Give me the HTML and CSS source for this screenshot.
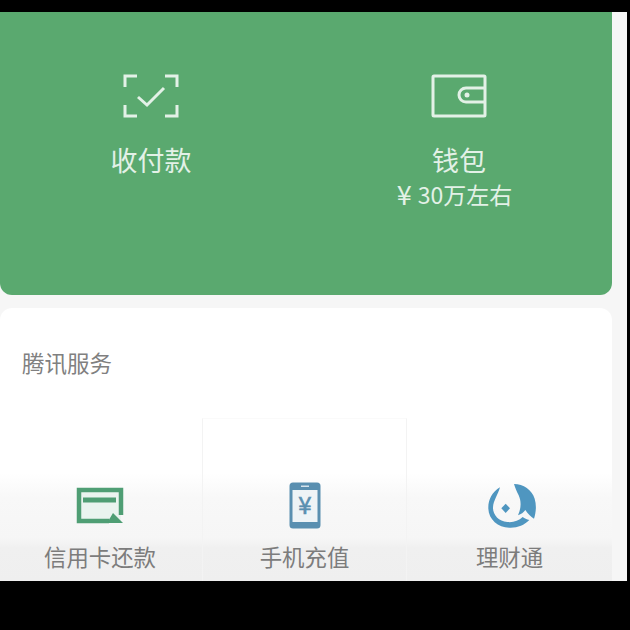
FILE: index.html
```html
<!DOCTYPE html>
<html lang="zh-CN">
<head>
    <meta charset="UTF-8">
    <meta name="viewport" content="width=device-width, initial-scale=1.0">
    <title>支付</title>
    <link rel="stylesheet" href="styles.css">
</head>
<body>
    <div class="screen">
        <div class="pay-card">
            <div class="pay-item">
                <svg class="pay-icon" width="56" height="46" viewBox="0 0 56 46">
                    <path d="M2 14V3H14M42 3H54V14M2 32V43H14M42 43H54V32" />
                    <path d="M15 24L24 32L41 15" />
                </svg>
                <div class="pay-name">收付款</div>
            </div>
            <div class="pay-item pay-item-right">
                <svg class="pay-icon" width="56" height="46" viewBox="0 0 56 46">
                    <rect x="2" y="3" width="52" height="40" rx="1" />
                    <path d="M54 15H35A7 7 0 0 0 35 29H54" />
                    <circle class="pay-dot" cx="36" cy="22" r="2.5" />
                </svg>
                <div class="pay-name">钱包</div>
                <div class="pay-note"><span class="pay-yen">¥</span>30万左右</div>
            </div>
        </div>

        <div class="service-card">
            <div class="service-title">腾讯服务</div>
            <div class="service-grid">
                <div class="service-cell service-cell-first">
                    <div class="service-icon">
                        <svg width="48" height="38" viewBox="0 0 48 38">
                            <path class="card-fill" d="M3 3H45V35H3Z" />
                            <path class="card-line" d="M33 34H3V3H45V28" />
                            <path class="card-bar" d="M7 13H40" />
                            <path class="card-tip" d="M31 36L37 26L47 36Z" />
                        </svg>
                    </div>
                    <div class="service-name">信用卡还款</div>
                </div>
                <div class="service-cell service-cell-mid">
                    <div class="service-icon">
                        <svg width="32" height="47" viewBox="0 0 32 47">
                            <rect class="phone-body" x="0.5" y="0.5" width="31" height="46" rx="3.5" />
                            <rect class="phone-screen" x="3.5" y="8" width="25" height="32" />
                            <rect class="phone-slot" x="12" y="3.5" width="8" height="1.5" />
                            <text class="phone-yen" x="16" y="32" text-anchor="middle">¥</text>
                        </svg>
                    </div>
                    <div class="service-name">手机充值</div>
                </div>
                <div class="service-cell">
                    <div class="service-icon service-icon-fish">
                        <svg width="50" height="46" viewBox="70 42 150 136">
                            <path class="fish" d="M106 54C82 68 70 92 71 118C72 150 100 174 134 175C158 176 178 168 194 152C186 150 180 147 174 143C162 154 146 160 128 158C102 156 84 136 85 114C86 94 100 76 106 54Z" />
                            <path class="fish" d="M148 44C176 44 202 62 210 88C216 108 214 130 208 148C198 142 190 134 182 122C176 130 170 134 160 138C170 116 170 96 162 78C156 66 152 56 148 44Z" />
                            <path class="fish" d="M123 103L136 117L123 131L110 117Z" />
                        </svg>
                    </div>
                    <div class="service-name">理财通</div>
                </div>
            </div>
        </div>
    </div>
</body>
</html>
```

FILE: styles.css
```css
body {
    font-family: "Noto Sans CJK SC", "Noto Sans", sans-serif;
    background-color: #000;
    margin: 0;
    padding: 0;
}
.screen {
    width: 627px;
    height: 569px;
    margin-top: 12px;
    background-color: #f6f6f6;
    overflow: hidden;
}
.pay-card {
    display: grid;
    grid-template-columns: 302px 1fr;
    box-sizing: border-box;
    width: 612px;
    height: 283px;
    padding-top: 61px;
    background-color: #5aa96f;
    border-radius: 0 0 12px 12px;
    color: #e3f1e7;
}
.pay-item {
    display: flex;
    flex-direction: column;
    align-items: center;
}
.pay-item-right {
    padding-left: 4px;
}
.pay-icon {
    display: block;
    fill: none;
    stroke: #e3f1e7;
    stroke-width: 3;
}
.pay-dot {
    fill: #e3f1e7;
    stroke: none;
}
.pay-name {
    margin-top: 21px;
    font-size: 27px;
    line-height: 40px;
}
.pay-note {
    display: flex;
    align-items: center;
    font-size: 23px;
    line-height: 30px;
    margin: -1px 9px 0 0;
}
.pay-yen {
    margin-right: 6px;
    font-size: 27px;
    line-height: 30px;
}
.service-card {
    width: 612px;
    height: 273px;
    margin-top: 13px;
    background: linear-gradient(#ffffff 0, #ffffff 165px, #f8f8f8 190px, #f6f6f6 230px, #f0f0f0 240px, #efefef 100%);
    border-radius: 12px 12px 0 0;
}
.service-title {
    padding: 38px 0 0 22px;
    font-size: 22.5px;
    line-height: 32px;
    color: #808080;
}
.service-grid {
    display: grid;
    grid-template-columns: 202px 205px 205px;
    margin-top: 40px;
}
.service-cell {
    display: flex;
    flex-direction: column;
    align-items: center;
    justify-content: flex-end;
    height: 163px;
    padding-bottom: 9px;
    box-sizing: border-box;
}
.service-cell-first {
    padding-right: 2px;
}
.service-cell-mid {
    border-left: 1px solid #f3f3f3;
    border-right: 1px solid #f3f3f3;
    border-top: 1px solid #fafafa;
}
.service-icon {
    display: flex;
    align-items: center;
    justify-content: center;
    height: 47px;
}
.service-icon svg {
    display: block;
}
.service-icon-fish {
    padding-left: 6px;
}
.service-name {
    margin-top: 11px;
    font-size: 22.4px;
    line-height: 32px;
    color: #7c7c7c;
}
.card-fill {
    fill: #eaf4ef;
}
.card-line {
    fill: none;
    stroke: #4f9e74;
    stroke-width: 4.5;
}
.card-bar {
    stroke: #4f9e74;
    stroke-width: 5;
}
.card-tip {
    fill: #4f9e74;
}
.phone-body {
    fill: #5a8fb0;
}
.phone-screen {
    fill: #eef3f6;
}
.phone-slot {
    fill: #d6e3ec;
}
.phone-yen {
    fill: #5a8fb0;
    stroke: #5a8fb0;
    stroke-width: 0.6;
    font-size: 24px;
}
.fish {
    fill: #4f96c0;
}
```
